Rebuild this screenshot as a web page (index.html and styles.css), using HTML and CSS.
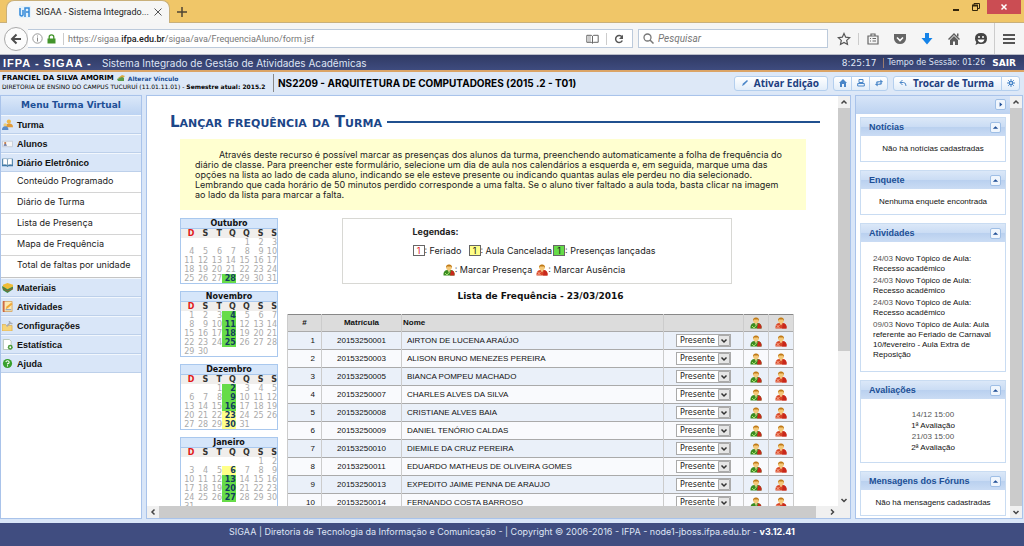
FILE: index.html
```html
<!DOCTYPE html>
<html lang="pt-BR">
<head>
<meta charset="utf-8">
<title>SIGAA - Sistema Integrado de Gestão de Atividades Acadêmicas</title>
<link rel="stylesheet" href="styles.css">
</head>
<body>
<svg class="defs" aria-hidden="true">
  <symbol id="person" viewBox="0 0 12 12">
    <path d="M.5 11.500q-.5-5 3.500-5.500h4q4 .5 3.500 5.500z" fill="var(--coat)"/>
    <path d="M8 6.200q4 .3 3.500 5.300H7z" fill="#c8281c"/>
    <circle cx="6" cy="3.600" r="2.800" fill="#f4c878"/>
    <path d="M3 4q-.3-3.600 3-3.600T9 4L8 2.600H4z" fill="#c07a18"/>
    <path d="M4.500 6.300h3L6 8.300z" fill="#f8dc9c"/>
  </symbol>
  <symbol id="check" viewBox="0 0 12 12">
    <use href="#person"/>
    <path d="M2 9l2 2 3-3.500" fill="none" stroke="#a8e070"/>
  </symbol>
  <symbol id="cross" viewBox="0 0 12 12">
    <use href="#person"/>
    <path d="M1.500 8l3 3m0-3l-3 3" stroke="#f8a890"/>
  </symbol>
  <symbol id="up" viewBox="0 0 10 10"><path d="M2 6.500h6L5 3.500z" fill="#204f96"/></symbol>
</svg>

<header class="browser">
  <div class="tabs">
    <div class="tab">
      <svg class="favicon" viewBox="0 0 12 12"><path fill="#e4f2fc" d="M0 0h12v12H0z"/><path d="M1 2v7q2 2 3 0V4M6 11V2h4v9M7 6h3" fill="none" stroke="#3389d8" stroke-width="1.500"/></svg>
      <span class="tabtitle">SIGAA - Sistema Integrado...</span>
      <button class="plain" aria-label="Fechar aba"><svg width="8" height="8" viewBox="0 0 8 8"><path d="M.5.5l7 7m0-7l-7 7" stroke="#555"/></svg></button>
    </div>
    <button class="plain newtab" aria-label="Nova aba"><svg width="10" height="10" viewBox="0 0 10 10"><path d="M5 0v10M0 5h10" stroke="#4d4433" stroke-width="1.500"/></svg></button>
    <div class="window">
      <button class="plain" aria-label="Minimizar"><svg width="10" height="10" viewBox="0 0 10 10"><path d="M2 8h6" stroke="#33260c" stroke-width="2"/></svg></button>
      <button class="plain" aria-label="Restaurar"><svg width="10" height="10" viewBox="0 0 10 10"><path d="M1.500 3.500h5v5h-5zM3 3V1.500h5.500v5H7" fill="none" stroke="#33260c"/><path d="M1 3.500h6" stroke="#33260c" stroke-width="2"/></svg></button>
      <button class="close" aria-label="Fechar"><svg width="8" height="8" viewBox="0 0 8 8"><path d="M1.500 1.500l5 5m0-5l-5 5" stroke="#fff" stroke-width="1.500"/></svg></button>
    </div>
  </div>
  <div class="toolbar">
    <button class="back" aria-label="Voltar"><svg width="12" height="12" viewBox="0 0 12 12"><path d="M6.500 1.500L2 6l4.500 4.500M2 6h9" fill="none" stroke="#4d4d4d" stroke-width="2"/></svg></button>
    <div class="address">
      <svg width="11" height="11" viewBox="0 0 11 11"><circle cx="5.500" cy="5.500" r="4.700" fill="none" stroke="#999"/><path d="M5.500 4.500v4M5.500 2.500v1" stroke="#888"/></svg>
      <svg class="lock" width="9" height="10" viewBox="0 0 9 10"><path d="M.5 4.500h8v5h-8z" fill="#43942b"/><path d="M2.200 5V3q0-2.200 2.300-2.200T6.800 3v2" fill="none" stroke="#43942b" stroke-width="1.300"/></svg>
      <i class="sep"></i>
      <span class="url">https://sigaa.<b>ifpa.edu.br</b>/sigaa/ava/FrequenciaAluno/form.jsf</span>
      <svg width="13" height="10" viewBox="0 0 13 10"><path d="M6.500 2v7M.8 1.300h4.500l1.200 1 1.200-1h4.500v7H7.700l-1.200 1-1.200-1H.8z" fill="none" stroke="#666"/><path d="M2 3h3M2 5h3M2 7h3" stroke="#999"/></svg>
      <i class="sep"></i>
      <svg width="10" height="10" viewBox="0 0 10 10"><path d="M8.300 6.500A3.500 3.500 0 1 1 8 3" fill="none" stroke="#555" stroke-width="1.500"/><path d="M9 .8V5H5z" fill="#555"/></svg>
    </div>
    <div class="search">
      <svg width="11" height="11" viewBox="0 0 11 11"><circle cx="4.500" cy="4.500" r="3.500" fill="none" stroke="#777" stroke-width="1.300"/><path d="M7 7l3.500 3.500" stroke="#777" stroke-width="1.500"/></svg>
      <input type="text" aria-label="Pesquisar" placeholder="Pesquisar">
    </div>
    <div class="actions">
      <svg viewBox="0 0 14 14"><path d="M7 1.500l1.700 3.700 4 .5-3 2.700.8 4L7 10.400l-3.500 2 .8-4-3-2.700 4-.5z" fill="none" stroke="#555" stroke-width="1.200"/></svg>
      <i class="sep"></i>
      <div class="tools">
        <svg viewBox="0 0 14 14"><path d="M2 4h10v8H2zM5 4V2h4v2M4 6.500h1M6.500 6.500H10M4 9h1M6.500 9H10" fill="none" stroke="#666" stroke-width="1.200"/></svg>
        <svg viewBox="0 0 14 14"><path d="M1 2h12v5q-1 5-6 5T1 7z" fill="#666"/><path d="M4 5.500l3 3 3-3" fill="none" stroke="#fff" stroke-width="1.600"/></svg>
        <svg viewBox="0 0 14 14"><path d="M5 1h4v5h3.500L7 12.500 1.500 6H5z" fill="#1583e8"/></svg>
        <svg viewBox="0 0 14 14"><path d="M7 1l6 6-1 1-5-5-5 5-1-1zM3 8l4-4 4 4v5H8V9.500H6V13H3z" fill="#5c5c5c"/><path d="M10 1.500h1.500v3H10z" fill="#5c5c5c"/></svg>
        <svg viewBox="0 0 14 14"><path d="M7 1q6 0 6 5.500T7 12q-1.500 0-2.500-.5L1.500 13l.8-3Q1 8.500 1 6.500 1 1 7 1z" fill="#444"/><circle cx="5" cy="5" r="1" fill="#fff"/><circle cx="9" cy="5" r="1" fill="#fff"/><path d="M3.500 7.500h7q-1 3-3.500 3t-3.500-3z" fill="#fff"/></svg>
      </div>
      <i class="sep tall"></i>
      <svg viewBox="0 0 14 14"><path d="M1 3h12M1 7h12M1 11h12" stroke="#555" stroke-width="2"/></svg>
    </div>
  </div>
</header>

<div class="brand">
  <b class="logo">IFPA - SIGAA -</b>
  <span class="system">Sistema Integrado de Gestão de Atividades Acadêmicas</span>
  <span class="clock">8:25:17</span>
  <span class="session">Tempo de Sessão: 01:26</span>
  <a class="exit" href="#">SAIR</a>
</div>

<div class="info">
  <div class="user">
    <div><b>FRANCIEL DA SILVA AMORIM</b> <svg width="8" height="7" viewBox="0 0 8 7"><path d="M1 3l4-3 3 1-3 3z" fill="#d8a840"/><path d="M0 4l5-2 2 1v3H1z" fill="#5c9c4c"/></svg> <a href="#">Alterar Vínculo</a></div>
    <div class="unit">DIRETORIA DE ENSINO DO CAMPUS TUCURUÍ (11.01.11.01) - <b><i>Semestre atual:</i> 2015.2</b></div>
  </div>
  <b class="course">NS2209 - ARQUITETURA DE COMPUTADORES (2015 .2 - T01)</b>
  <button class="btn edit"><svg width="8" height="8" viewBox="0 0 8 8"><path d="M1 7l1-2.500L6 1l1 1-4 4z" fill="#4a86c8"/></svg>Ativar Edição</button>
  <div class="group">
    <button class="btn" aria-label="Início"><svg width="8" height="8" viewBox="0 0 8 8"><path d="M4 0l4 4H7v4H5V5H3v3H1V4H0z" fill="#4a86c8"/></svg></button>
    <button class="btn" aria-label="Imprimir"><svg width="8" height="8" viewBox="0 0 8 8"><path d="M2 .5h4v3H2zM.7 4.500h6.600v2.500H.7z" fill="none" stroke="#4a86c8"/></svg></button>
    <button class="btn" aria-label="Alternar"><svg width="8" height="8" viewBox="0 0 9 8"><path d="M1 4q0-2 2-2h3V0l3 2.500-3 2V3M8 4q0 2-2 2H3v2L0 5.500l3-2V5" fill="#4a86c8"/></svg></button>
  </div>
  <div class="group">
    <button class="btn swap"><svg width="8" height="8" viewBox="0 0 8 8"><path d="M3.500 1L1 3.500 3.500 6M1 3.500h3.500q2.500 0 2.500 3.500" fill="none" stroke="#4a86c8"/></svg>Trocar de Turma</button>
    <button class="btn" aria-label="Opções"><svg width="8" height="8" viewBox="0 0 8 8"><path d="M4 0v8M0 4h8M1.200 1.200l5.600 5.600m0-5.600L1.200 6.800" stroke="#4a86c8"/><circle cx="4" cy="4" r="1.700" fill="#dceaf8" stroke="#4a86c8" stroke-width="1.200"/></svg></button>
  </div>
</div>

<div class="workspace">
  <nav class="menu">
    <h2>Menu Turma Virtual</h2>
    <ul class="sections">
      <li><svg viewBox="0 0 12 12"><circle cx="7.500" cy="2.800" r="2.300" fill="#f0b848"/><path d="M4 9q0-4 4-4t4 4z" fill="#e09a38"/><circle cx="3.500" cy="6.500" r="2" fill="#f0cc78"/><path d="M0 12q0-4 3.500-4T7 12z" fill="#5c8cc8"/></svg><a href="#">Turma</a></li>
      <li><svg viewBox="0 0 12 12"><path d="M.5 3.500h11v6H.5z" fill="#f6f6f6" stroke="#c4ccd8"/><circle cx="3.500" cy="5.500" r="1.200" fill="#c07848"/><path d="M1.700 8.500q0-2 1.800-2t1.800 2z" fill="#5c6c9c"/></svg><a href="#">Alunos</a></li>
      <li><svg viewBox="0 0 12 12"><path d="M0 2h12v8H7l-1 1-1-1H0z" fill="#3c78a8"/><path d="M1 2q3-1 5 .5Q8 1 11 2v6.500q-3-.8-5 .5-2-1.300-5-.5z" fill="#fff" stroke="#7898b0" stroke-width=".6"/><path d="M6 2.500V9" stroke="#7898b0"/></svg><a href="#">Diário Eletrônico</a></li>
    </ul>
    <ul class="sub">
      <li><a href="#">Conteúdo Programado</a></li>
      <li><a href="#">Diário de Turma</a></li>
      <li><a href="#">Lista de Presença</a></li>
      <li><a href="#">Mapa de Frequência</a></li>
      <li><a href="#">Total de faltas por unidade</a></li>
    </ul>
    <ul class="sections">
      <li><svg viewBox="0 0 12 12"><path d="M0 5l6-2 6 2v3l-6 4-5-3z" fill="#3c8c4c"/><path d="M1 3l5-2 6 2v2L6 8 1 5z" fill="#f0bc38"/><path d="M1 7l5 3 6-3" fill="none" stroke="#9c5c2c"/></svg><a href="#">Materiais</a></li>
      <li><svg viewBox="0 0 12 12"><path d="M1 .5h10v11H1z" fill="#fbe8b0" stroke="#d8a868"/><path d="M2 0v12" stroke="#c8583c" stroke-width="1.500"/><path d="M4 9l1-3 5-4 1.500 1.500-5 4z" fill="#f0a838"/><path d="M4 9.500h6" stroke="#6c8cc8"/></svg><a href="#">Atividades</a></li>
      <li><svg viewBox="0 0 12 12"><path d="M0 5h4l1 1h6v6H0z" fill="#f6d478" stroke="#d8a848" stroke-width=".7"/><path d="M5 7l4-4" stroke="#a8acb4" stroke-width="1.700"/><path d="M8 1q0 3 3.500 3" fill="none" stroke="#a8acb4" stroke-width="1.500"/></svg><a href="#">Configurações</a></li>
      <li><svg viewBox="0 0 12 12"><path d="M1.500.5H8l2 2v9H1.500z" fill="#fff" stroke="#b4c4b4"/><circle cx="9" cy="9" r="2.700" fill="#4c9c3c"/><circle cx="9" cy="9" r="1" fill="#fff"/></svg><a href="#">Estatística</a></li>
      <li><svg viewBox="0 0 12 12"><circle cx="6" cy="6" r="5" fill="#38a02c"/><path d="M4.200 4.500Q4.500 3 6 3t1.800 1.500Q7.800 6 6 6.300V7M6 8v1.300" fill="none" stroke="#fff" stroke-width="1.200"/></svg><a href="#">Ajuda</a></li>
    </ul>
  </nav>

  <main class="center">
    <div class="content">
      <h1>Lançar frequência da Turma</h1>
      <p class="help">Através deste recurso é possível marcar as presenças dos alunos da turma, preenchendo automaticamente a folha de frequência do<br>diário de classe. Para preencher este formulário, selecione um dia de aula nos calendários a esquerda e, em seguida, marque uma das<br>opções na lista ao lado de cada aluno, indicando se ele esteve presente ou indicando quantas aulas ele perdeu no dia selecionado.<br>Lembrando que cada horário de 50 minutos perdido corresponde a uma falta. Se o aluno tiver faltado a aula toda, basta clicar na imagem<br>ao lado da lista para marcar a falta.</p>
      <div class="columns">
        <div class="calendars">
          <table class="cal">
            <caption>Outubro</caption>
            <tr><th>D</th><th>S</th><th>T</th><th>Q</th><th>Q</th><th>S</th><th>S</th></tr>
            <tr><td></td><td></td><td></td><td></td><td>1</td><td>2</td><td>3</td></tr>
            <tr><td>4</td><td>5</td><td>6</td><td>7</td><td>8</td><td>9</td><td>10</td></tr>
            <tr><td>11</td><td>12</td><td>13</td><td>14</td><td>15</td><td>16</td><td>17</td></tr>
            <tr><td>18</td><td>19</td><td>20</td><td>21</td><td>22</td><td>23</td><td>24</td></tr>
            <tr><td>25</td><td>26</td><td>27</td><td class="done">28</td><td>29</td><td>30</td><td>31</td></tr>
          </table>
          <table class="cal">
            <caption>Novembro</caption>
            <tr><th>D</th><th>S</th><th>T</th><th>Q</th><th>Q</th><th>S</th><th>S</th></tr>
            <tr><td>1</td><td>2</td><td>3</td><td class="done">4</td><td>5</td><td>6</td><td>7</td></tr>
            <tr><td>8</td><td>9</td><td>10</td><td class="done">11</td><td>12</td><td>13</td><td>14</td></tr>
            <tr><td>15</td><td>16</td><td>17</td><td class="done">18</td><td>19</td><td>20</td><td>21</td></tr>
            <tr><td>22</td><td>23</td><td>24</td><td class="done">25</td><td>26</td><td>27</td><td>28</td></tr>
            <tr><td>29</td><td>30</td><td></td><td></td><td></td><td></td><td></td></tr>
          </table>
          <table class="cal">
            <caption>Dezembro</caption>
            <tr><th>D</th><th>S</th><th>T</th><th>Q</th><th>Q</th><th>S</th><th>S</th></tr>
            <tr><td></td><td></td><td>1</td><td class="done">2</td><td>3</td><td>4</td><td>5</td></tr>
            <tr><td>6</td><td>7</td><td>8</td><td class="done">9</td><td>10</td><td>11</td><td>12</td></tr>
            <tr><td>13</td><td>14</td><td>15</td><td class="done">16</td><td>17</td><td>18</td><td>19</td></tr>
            <tr><td>20</td><td>21</td><td>22</td><td class="cancelled">23</td><td>24</td><td>25</td><td>26</td></tr>
            <tr><td>27</td><td>28</td><td>29</td><td class="cancelled">30</td><td>31</td><td></td><td></td></tr>
          </table>
          <table class="cal">
            <caption>Janeiro</caption>
            <tr><th>D</th><th>S</th><th>T</th><th>Q</th><th>Q</th><th>S</th><th>S</th></tr>
            <tr><td></td><td></td><td></td><td></td><td></td><td>1</td><td>2</td></tr>
            <tr><td>3</td><td>4</td><td>5</td><td class="cancelled">6</td><td>7</td><td>8</td><td>9</td></tr>
            <tr><td>10</td><td>11</td><td>12</td><td class="done">13</td><td>14</td><td>15</td><td>16</td></tr>
            <tr><td>17</td><td>18</td><td>19</td><td class="done">20</td><td>21</td><td>22</td><td>23</td></tr>
            <tr><td>24</td><td>25</td><td>26</td><td class="done">27</td><td>28</td><td>29</td><td>30</td></tr>
            <tr><td>31</td><td></td><td></td><td></td><td></td><td></td><td></td></tr>
          </table>
        </div>
        <section class="list">
          <div class="legend">
            <b>Legendas:</b>
            <div class="keys">
              <span><i class="key holiday">1</i>: Feriado</span>
              <span class="wide"><i class="key cancelled">1</i>: Aula Cancelada</span>
              <span><i class="key done">1</i>: Presenças lançadas</span>
            </div>
            <div class="keys marks">
              <span><svg class="green"><use href="#check"/></svg>: Marcar Presença</span>
              <span class="next"><svg class="red"><use href="#cross"/></svg>: Marcar Ausência</span>
            </div>
          </div>
          <h3>Lista de Frequência - 23/03/2016</h3>
          <table class="students">
            <colgroup><col class="c-num"><col class="c-id"><col class="c-name"><col class="c-state"><col class="c-icon"><col class="c-icon"></colgroup>
            <thead><tr><th>#</th><th>Matrícula</th><th class="left">Nome</th><th></th><th><svg class="green"><use href="#check"/></svg></th><th><svg class="red"><use href="#cross"/></svg></th></tr></thead>
            <tbody>
            <tr><td>1</td><td>20153250001</td><td>AIRTON DE LUCENA ARAÚJO</td><td><select aria-label="Frequência de AIRTON DE LUCENA ARAÚJO"><option>Presente</option></select></td><td><svg class="green"><use href="#check"/></svg></td><td><svg class="red"><use href="#cross"/></svg></td></tr>
            <tr><td>2</td><td>20153250003</td><td>ALISON BRUNO MENEZES PEREIRA</td><td><select aria-label="Frequência de ALISON BRUNO MENEZES PEREIRA"><option>Presente</option></select></td><td><svg class="green"><use href="#check"/></svg></td><td><svg class="red"><use href="#cross"/></svg></td></tr>
            <tr><td>3</td><td>20153250005</td><td>BIANCA POMPEU MACHADO</td><td><select aria-label="Frequência de BIANCA POMPEU MACHADO"><option>Presente</option></select></td><td><svg class="green"><use href="#check"/></svg></td><td><svg class="red"><use href="#cross"/></svg></td></tr>
            <tr><td>4</td><td>20153250007</td><td>CHARLES ALVES DA SILVA</td><td><select aria-label="Frequência de CHARLES ALVES DA SILVA"><option>Presente</option></select></td><td><svg class="green"><use href="#check"/></svg></td><td><svg class="red"><use href="#cross"/></svg></td></tr>
            <tr><td>5</td><td>20153250008</td><td>CRISTIANE ALVES BAIA</td><td><select aria-label="Frequência de CRISTIANE ALVES BAIA"><option>Presente</option></select></td><td><svg class="green"><use href="#check"/></svg></td><td><svg class="red"><use href="#cross"/></svg></td></tr>
            <tr><td>6</td><td>20153250009</td><td>DANIEL TENÓRIO CALDAS</td><td><select aria-label="Frequência de DANIEL TENÓRIO CALDAS"><option>Presente</option></select></td><td><svg class="green"><use href="#check"/></svg></td><td><svg class="red"><use href="#cross"/></svg></td></tr>
            <tr><td>7</td><td>20153250010</td><td>DIEMILE DA CRUZ PEREIRA</td><td><select aria-label="Frequência de DIEMILE DA CRUZ PEREIRA"><option>Presente</option></select></td><td><svg class="green"><use href="#check"/></svg></td><td><svg class="red"><use href="#cross"/></svg></td></tr>
            <tr><td>8</td><td>20153250011</td><td>EDUARDO MATHEUS DE OLIVEIRA GOMES</td><td><select aria-label="Frequência de EDUARDO MATHEUS DE OLIVEIRA GOMES"><option>Presente</option></select></td><td><svg class="green"><use href="#check"/></svg></td><td><svg class="red"><use href="#cross"/></svg></td></tr>
            <tr><td>9</td><td>20153250013</td><td>EXPEDITO JAIME PENNA DE ARAUJO</td><td><select aria-label="Frequência de EXPEDITO JAIME PENNA DE ARAUJO"><option>Presente</option></select></td><td><svg class="green"><use href="#check"/></svg></td><td><svg class="red"><use href="#cross"/></svg></td></tr>
            <tr><td>10</td><td>20153250014</td><td>FERNANDO COSTA BARROSO</td><td><select aria-label="Frequência de FERNANDO COSTA BARROSO"><option>Presente</option></select></td><td><svg class="green"><use href="#check"/></svg></td><td><svg class="red"><use href="#cross"/></svg></td></tr>
            </tbody>
          </table>
        </section>
      </div>
    </div>
    <div class="vbar">
      <svg viewBox="0 0 12 12"><path d="M3.500 7.500L6 5l2.500 2.500" fill="none" stroke="#444" stroke-width="1.500"/></svg>
      <div class="track"><div class="thumb"></div></div>
      <svg viewBox="0 0 12 12"><path d="M3.500 5L6 7.500 8.500 5" fill="none" stroke="#444" stroke-width="1.500"/></svg>
    </div>
    <div class="hbar">
      <svg viewBox="0 0 12 12"><path d="M7.500 3.500L5 6l2.500 2.500" fill="none" stroke="#444" stroke-width="1.500"/></svg>
      <div class="thumb"></div>
      <svg viewBox="0 0 12 12"><path d="M5 3.500L7.500 6 5 8.500" fill="none" stroke="#444" stroke-width="1.500"/></svg>
    </div>
  </main>

  <aside class="side">
    <div class="blocks">
      <div class="sidehead"><button class="toggle" aria-label="Recolher painel"><svg viewBox="0 0 10 10"><path d="M4 2.500v5L7 5z" fill="#204f96"/></svg></button></div>
      <section class="block"><h2>Notícias<button class="toggle" aria-label="Recolher Notícias"><svg><use href="#up"/></svg></button></h2><p>Não há notícias cadastradas</p></section>
      <section class="block"><h2>Enquete<button class="toggle" aria-label="Recolher Enquete"><svg><use href="#up"/></svg></button></h2><p>Nenhuma enquete encontrada</p></section>
      <section class="block"><h2>Atividades<button class="toggle" aria-label="Recolher Atividades"><svg><use href="#up"/></svg></button></h2>
        <ul class="feed">
          <li><time>24/03</time> Novo Tópico de Aula: Recesso acadêmico</li>
          <li><time>24/03</time> Novo Tópico de Aula: Recesso acadêmico</li>
          <li><time>24/03</time> Novo Tópico de Aula: Recesso acadêmico</li>
          <li><time>09/03</time> Novo Tópico de Aula: Aula referente ao Feriado de Carnaval 10/fevereiro - Aula Extra de Reposição</li>
        </ul>
      </section>
      <section class="block"><h2>Avaliações<button class="toggle" aria-label="Recolher Avaliações"><svg><use href="#up"/></svg></button></h2>
        <div class="exams"><time>14/12 15:00</time><span>1ª Avaliação</span><time>21/03 15:00</time><span>2ª Avaliação</span></div>
      </section>
      <section class="block"><h2>Mensagens dos Fóruns<button class="toggle" aria-label="Recolher Mensagens dos Fóruns"><svg><use href="#up"/></svg></button></h2><p>Não há mensagens cadastradas</p></section>
    </div>
    <div class="vbar">
      <svg viewBox="0 0 12 12"><path d="M3.500 7.500L6 5l2.500 2.500" fill="none" stroke="#444" stroke-width="1.500"/></svg>
      <div class="track"><div class="thumb full"></div></div>
      <svg viewBox="0 0 12 12"><path d="M3.500 5L6 7.500 8.500 5" fill="none" stroke="#444" stroke-width="1.500"/></svg>
    </div>
  </aside>
</div>

<footer class="footer">SIGAA | Diretoria de Tecnologia da Informação e Comunicação - | Copyright © 2006-2016 - IFPA - node1-jboss.ifpa.edu.br - <b>v3.12.41</b></footer>
</body>
</html>
```
FILE: styles.css
```css
* { box-sizing: border-box; }
:root { --text: Inter, sans-serif; --verdana: "DejaVu Sans", Verdana, sans-serif; --arial: "Liberation Sans", Arial, sans-serif; --line: #a9c3ea; }
body { margin: 0; height: 100vh; display: flex; flex-direction: column; overflow: hidden; font: 9px/10px var(--text); color: #222; background: #d9e6f8; }
button { font: inherit; cursor: pointer; }
a { color: inherit; text-decoration: none; }
ul { list-style: none; margin: 0; padding: 0; }
svg { display: block; flex: none; }
.defs { display: none; }
.plain { border: 0; background: none; padding: 0; }

.browser { font-family: Roboto, sans-serif; flex: none; }
.tabs { height: 23px; display: flex; align-items: flex-start; background: #f0c668; border-bottom: 1px solid #c9b07a; }
.tab { display: flex; align-items: center; width: 164px; height: 23px; margin-left: 6px; padding: 0 9px 0 12px; gap: 5px; background: #f6f6f5; border: 1px solid #c9b07a; border-bottom: 0; border-radius: 8px 8px 0 0; color: #222; white-space: nowrap; }
.tabtitle { flex: 1; }
.favicon { width: 12px; height: 12px; }
.newtab { margin: 7px 0 0 7px; }
.window { margin-left: auto; display: flex; gap: 10px; align-items: center; padding-right: 3px; }
.window .close { margin-left: -4px; }
.close { width: 34px; height: 14px; border: 0; padding: 0; background: #cb4d53; display: flex; align-items: center; justify-content: center; }
.toolbar { height: 32px; display: flex; align-items: center; padding: 0 8px 0 4px; background: #f5f5f5; border-bottom: 1px solid #b9bcc8; }
.back { width: 24px; height: 24px; border: 1px solid #a9a9a9; border-radius: 50%; background: #fcfcfc; padding: 0; display: flex; align-items: center; justify-content: center; }
.address, .search { height: 19px; display: flex; align-items: center; background: #fff; border: 1px solid #bccadb; }
.address { flex: 1; border-left: 0; padding: 0 8px 0 4px; gap: 7px; }
.address .lock { margin-left: -3px; }
.url { flex: 1; margin-left: -3px; color: #777; }
.url b { color: #222; font-weight: 500; }
.sep { width: 1px; height: 12px; background: #ccc; }
.search { width: 190px; margin-left: 5px; padding: 0 4px; gap: 4px; }
.search input { flex: 1; min-width: 0; border: 0; padding: 0; background: none; font: italic 10px/14px Roboto, sans-serif; }
.search input::placeholder { color: #777; opacity: 1; }
.actions { display: flex; align-items: center; justify-content: space-between; width: 179px; margin-left: 9px; }
.actions svg { width: 14px; height: 14px; }
.tools { display: flex; gap: 13px; }
.tall { height: 31px; }

.brand { flex: none; height: 17px; display: flex; align-items: center; padding: 0 8px 0 3px; background: linear-gradient(#303a64, #3e4b7e); border-bottom: 2px solid #dba466; color: #dfe5f5; white-space: nowrap; }
.logo { width: 99px; font: bold 11px/14px var(--arial); letter-spacing: 1px; color: #fff; }
.system { flex: 1; font-size: 10px; }
.clock { padding-right: 6px; font-family: var(--verdana); }
.session { border-left: 1px solid #9a7c70; padding: 0 7px 0 4px; font: 8px/10px var(--verdana); }
.exit { font: bold 9px/10px var(--verdana); color: #fff; }

.info { flex: none; height: 22px; display: flex; align-items: center; padding-right: 4px; background: #dde8f7; color: #000; white-space: nowrap; }
.user { width: 274px; height: 18px; padding-left: 2px; border-right: 1px solid #888; font: 7px/9px var(--verdana); }
.user div { display: flex; gap: 3px; align-items: center; }
.user a { color: #204f96; font-weight: bold; font-size: 6px; }
.user .unit { font-size: 6px; line-height: 8px; gap: 2px; }
.unit i { font-style: normal; }
.course { flex: 1; padding-left: 4px; font-size: 10px; }
.btn { height: 15px; padding: 0 6px; display: flex; align-items: center; justify-content: center; border: 1px solid #b4cfee; border-radius: 3px; background: linear-gradient(#fff, #e2edf9); color: #1d4080; font: bold 10px/12px "Noto Sans", sans-serif; }
.edit { padding: 0 8px 0 6px; gap: 5px; }
.group { display: flex; margin-left: 5px; }
.group .btn { border-radius: 0; margin-left: -1px; min-width: 19px; padding: 0 4px; }
.group .btn:first-child { border-radius: 3px 0 0 3px; margin-left: 0; }
.group .btn:last-child { border-radius: 0 3px 3px 0; }
.group .swap { padding: 0 7px 0 5px; gap: 6px; }

.workspace { flex: 1; min-height: 0; display: grid; grid-template-columns: 142px minmax(0, 1fr) 168px; column-gap: 4px; padding: 1px 1px 4px 0; background: #d9e6f8; }
.menu, .center, .side { background: #fff; border: 1px solid var(--line); min-height: 0; overflow: hidden; }
.menu h2 { margin: 0; height: 19px; background: linear-gradient(#dbe8f9, #bcd3f2); color: #204f96; font: bold 9px/19px var(--verdana); text-align: center; }
.sections li { height: 19px; display: flex; align-items: center; gap: 4px; padding-left: 1px; background: #d9e6f8; border-top: 1px solid #f2f7fd; border-bottom: 1px solid #bdd0ea; font: bold 9px/12px var(--arial); color: #111; }
.sections svg { width: 11px; height: 11px; }
.sub { border-bottom: 1px solid #c4c4c4; }
.sub li { height: 21px; padding-left: 16px; border-bottom: 1px solid #d4d4d4; line-height: 18px; white-space: nowrap; }
.sub li:last-child { border-bottom: 0; }

.center { display: grid; grid-template: minmax(0, 1fr) 12px / minmax(0, 1fr) 12px; }
.content { overflow: hidden; padding: 17px 18px 0 23px; }
h1 { margin: 0 0 8px; display: flex; align-items: center; gap: 5px; color: #1c4688; font: bold small-caps 15px/18px var(--verdana); white-space: nowrap; }
h1::after { content: ""; flex: 1; height: 2px; background: #20508f; }
.help { margin: 0 14px 8px 10px; padding: 11px 15px; height: 71px; background: #ffffd0; text-indent: 24px; white-space: nowrap; }
.columns { display: flex; gap: 9px; margin: 0 26px 0 10px; }
.calendars { display: flex; flex-direction: column; gap: 7px; flex: none; }
.cal { width: 98px; table-layout: fixed; border-collapse: collapse; border: 1px solid #a9c8ee; border-top: 0; font: 8px/9px var(--verdana); color: #aaa; }
.cal caption { background: #d6e6fa; border: 1px solid #a9c8ee; height: 11px; color: #111; font-weight: bold; }
.cal th, .cal td { padding: 0; height: 9px; text-align: right; }
.cal th { background: #f0eeec; color: #333; }
.cal th:first-child { color: #e01818; }
.cal td.done, .cal td.cancelled { color: #123c5c; font-weight: bold; }
.done { background: #66dc48; }
.cancelled { background: #ffff88; }
.list { flex: 1; min-width: 0; display: flex; flex-direction: column; align-items: center; }
.legend { width: 390px; height: 66px; margin-right: 8px; padding: 8px 69px 0 70px; border: 1px solid #d8d8d4; white-space: nowrap; }
.keys { display: flex; margin-top: 8px; }
.keys span { display: flex; align-items: center; }
.keys .wide { padding-left: 7px; padding-right: 1px; }
.key { width: 12px; height: 11px; border: 1px solid #666; font-style: normal; line-height: 9px; text-align: center; }
.holiday { color: #e01818; }
.marks { justify-content: center; padding-right: 6px; }
.next { margin-left: 4px; }
.green { --coat: #3a8c20; }
.red { --coat: #d84828; }
.marks svg, .students svg { width: 12px; height: 12px; margin: 0 auto; }
h3 { margin: 6px 0 12px; font: bold 9px/12px var(--verdana); color: #111; }
.students { width: 100%; table-layout: fixed; border-collapse: collapse; font: 8px/10px var(--arial); color: #111; }
.students tr { height: 18px; border-bottom: 1px solid #aaa; }
.students thead tr { height: 17px; background: #dcdcdc; border-top: 1px solid #888; }
.students th, .students td { padding: 0; border-left: 1px solid #ccc; border-right: 1px solid #ccc; text-align: center; }
.students tbody tr:nth-child(odd) { background: #eaf0f9; }
.students tbody tr:nth-child(even) { background: #f9fafd; }
.students tbody td:first-child { text-align: right; padding-right: 6px; }
.students th.left { text-align: left; padding-left: 1px; }
.students tbody td:nth-child(3) { text-align: left; padding-left: 5px; }
.c-num { width: 34px; } .c-id { width: 80px; } .c-state { width: 80px; } .c-icon { width: 25px; }
select { appearance: none; display: block; margin: 0 auto; width: 55px; height: 13px; padding: 0 0 0 3px; border: 1px solid #aaa; border-radius: 0; color: #222; font: 8px/11px var(--verdana); background: #fff url("data:image/svg+xml,%3Csvg xmlns='http://www.w3.org/2000/svg' width='12' height='11'%3E%3Cpath d='M.5.5h11v10H.5z' fill='%23e6e6e6' stroke='%23aaa'/%3E%3Cpath d='M3.500 4.500L6 7l2.500-2.500' fill='none' stroke='%23333' stroke-width='1.500'/%3E%3C/svg%3E") right center no-repeat; }

.vbar { display: flex; flex-direction: column; background: #f0f0f0; }
.vbar svg, .hbar svg { width: 12px; height: 12px; }
.track { flex: 1; }
.thumb { background: #cbcbcb; }
.vbar .thumb { height: 63%; }
.vbar .full { height: 100%; }
.hbar { grid-column: 1 / -1; display: flex; background: #f0f0f0; }
.hbar .thumb { flex: 1; margin-right: 10px; }
.hbar svg:last-child { margin-right: 12px; }

.side { display: grid; grid-template-columns: minmax(0, 1fr) 12px; }
.blocks { font-family: var(--arial); display: flex; flex-direction: column; gap: 8px; }
.sidehead { height: 18px; margin-bottom: -5px; padding: 3px 4px; display: flex; justify-content: flex-end; background: linear-gradient(#d7e5f8, #bdd3f1); }
.block { margin: 0 4px; border: 1px solid #c9dcf2; color: #111; font-size: 8px; }
.block h2 { margin: 0; height: 18px; padding: 0 4px 0 8px; display: flex; justify-content: space-between; align-items: center; background: linear-gradient(#dbe8f8, #cadcf4 50%, #b9d0ef 50%, #cadcf4); color: #204f96; font: bold 9px/12px var(--arial); }
.toggle { width: 11px; height: 11px; padding: 0; border: 1px solid #9fbfe6; border-radius: 2px; background: #f0f6fd; display: flex; align-items: center; justify-content: center; }
.toggle svg { width: 9px; height: 9px; }
.block p { margin: 0; line-height: 25px; text-align: center; white-space: nowrap; }
.feed { padding: 12px 8px 9px 12px; line-height: 10px; }
.feed li { margin-bottom: 2px; }
time { color: #555; }
.exams { padding: 10px 0 9px; display: flex; flex-direction: column; align-items: center; line-height: 11px; }

.footer { flex: none; height: 23px; background: #404d80; color: #dfe5f5; text-align: center; line-height: 18px; white-space: nowrap; }
.footer b { color: #fff; }
```
